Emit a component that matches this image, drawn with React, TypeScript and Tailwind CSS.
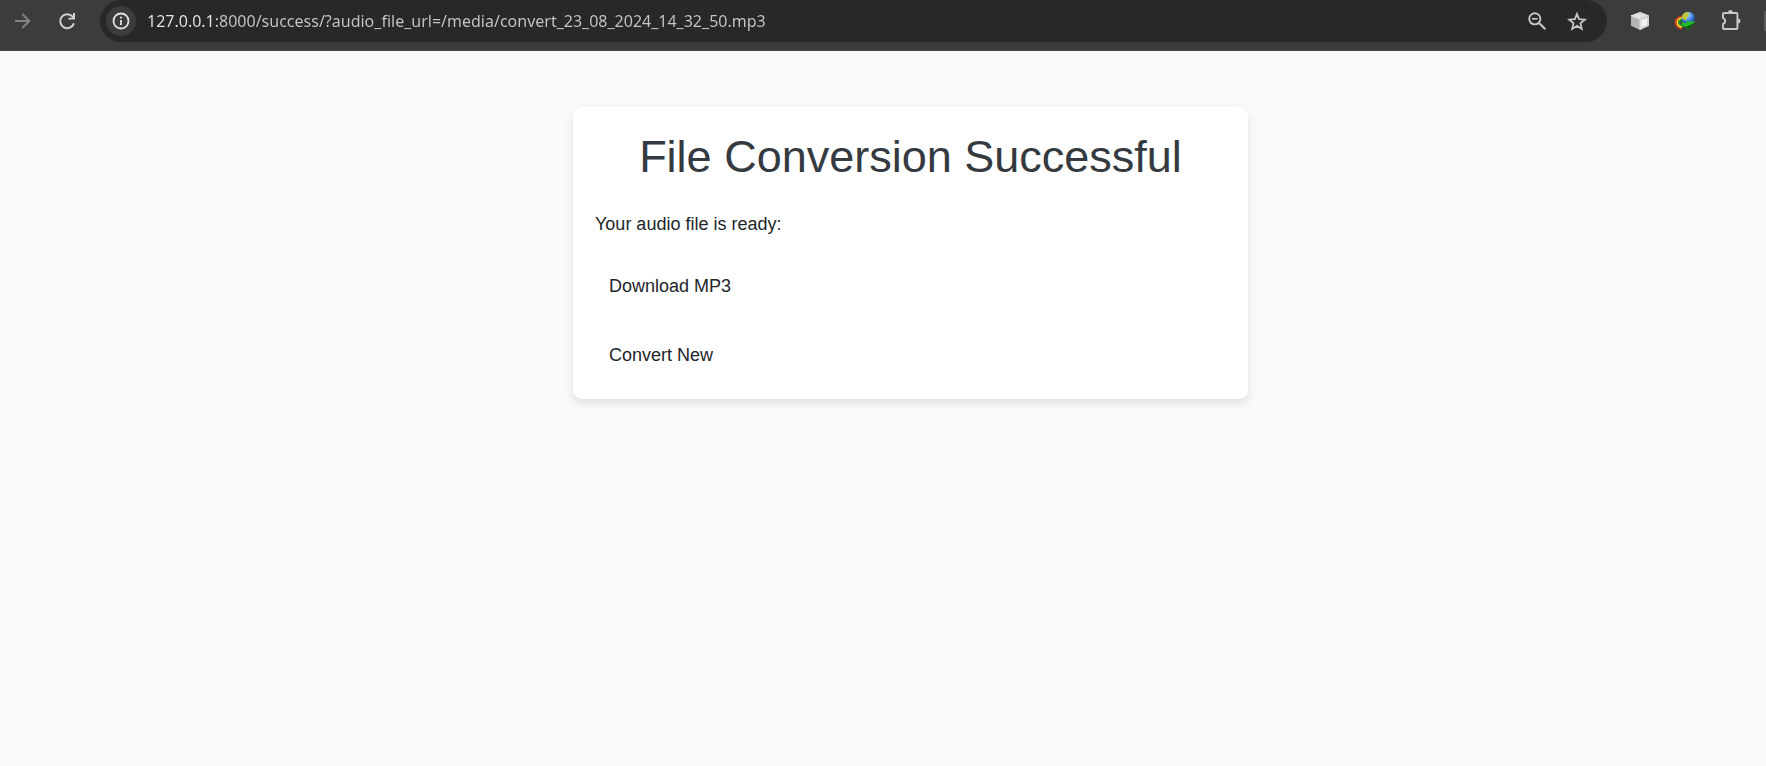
import React from "react";

function ForwardIcon() {
  return (
    <svg width="24" height="24" viewBox="0 0 24 24" fill="none" stroke="#858585" strokeWidth="1.8">
      <path d="M5 12h14M12.3 5l7 7-7 7" />
    </svg>
  );
}

function ReloadIcon() {
  return (
    <svg width="24" height="24" viewBox="0 0 24 24" fill="none">
      <path d="M18.9 14.4A7 7 0 1 1 17.6 7.6L19 9.2" stroke="#d2d2d2" strokeWidth="2" />
      <path d="M20 4v6.6h-6.6V8.8H18V4z" fill="#d2d2d2" />
    </svg>
  );
}

function InfoIcon() {
  return (
    <svg width="18" height="18" viewBox="0 0 18 18" fill="none">
      <circle cx="9" cy="9" r="7.5" stroke="#e3e3e3" strokeWidth="1.8" />
      <path d="M9 8v5" stroke="#e3e3e3" strokeWidth="1.8" />
      <circle cx="9" cy="5.6" r="1.1" fill="#e3e3e3" />
    </svg>
  );
}

function ZoomOutIcon() {
  return (
    <svg width="20" height="20" viewBox="0 0 20 20" fill="none" stroke="#c7c7c7">
      <circle cx="7.8" cy="7.8" r="5.6" strokeWidth="1.9" />
      <path d="M11.8 11.8l6.5 6.5" strokeWidth="2.1" />
      <path d="M5 7.8h5.600" strokeWidth="1.7" />
    </svg>
  );
}

function StarIcon() {
  return (
    <svg width="20" height="20" viewBox="0 0 20 20" fill="none" stroke="#c7c7c7" strokeWidth="1.8">
      <path d="M10 3l2.100 5.200 5.700.45-4.350 3.700 1.350 5.550L10 14.900l-4.800 3 1.350-5.550L2.200 8.650l5.700-.45z" />
    </svg>
  );
}

function CubeIcon() {
  return (
    <svg width="22" height="22" viewBox="0 0 22 22">
      <path d="M11 2l9 3.400v10.400L11 20l-9-4.200V5.400z" fill="#b5b5b5" />
      <path d="M11 2l9 3.400L11 9 2 5.400z" fill="#e0e0e0" />
      <path d="M11 9l9-3.600v10.400L11 20z" fill="#d0d0d0" />
      <path d="M12.500 10.200l5.500-2.100v6.700l-5.500 2.600z" fill="#f2f2f2" />
      <path d="M2 5.400L11 9v11" fill="none" stroke="#ededed" strokeWidth="0.9" />
    </svg>
  );
}

function GlobeArrowIcon() {
  return (
    <svg width="22" height="22" viewBox="0 0 22 22">
      <defs>
        <radialGradient id="globe" cx="0.4" cy="0.25" r="0.8">
          <stop offset="0" stopColor="#b8dcf8" />
          <stop offset="0.5" stopColor="#4a8ce0" />
          <stop offset="1" stopColor="#102c8c" />
        </radialGradient>
      </defs>
      <circle cx="14.3" cy="8.300" r="6.600" fill="url(#globe)" />
      <path d="M8.200 5.600C9.600 2.500 13 1.500 14.500 2.600c1 1.200.2 3-1.200 4.100-1 1.100.2 2.300-1.500 3.200C9.800 10.200 7.500 8.400 8.200 5.600z" fill="#c5c63c" />
      <path d="M7.500 6.400C3 7.200.6 10.800 1.700 14c.9 2.700 3.100 4.300 5.900 4.900" fill="none" stroke="#d94020" strokeWidth="1.700" />
      <path d="M7.800 7.900C4.500 8.600 2.800 11.200 3.500 13.600c.7 2 2.500 3.200 4.600 3.600" fill="none" stroke="#f1d71f" strokeWidth="1.700" />
      <path d="M8.200 9.400C5.900 10.400 5 12 5.500 13.600c.5 1.300 1.700 2 3.200 2.100" fill="none" stroke="#189c35" strokeWidth="1.500" />
      <path d="M8 11c.8 2 2.800 2.600 5 1.700l-1.500-1.500 9.800.4-7.500 9.500-.6-3.300C9.600 18.400 6.800 15.500 8 11z" fill="#25bd26" />
      <path d="M8 15c1.700 1.700 3.900 1.900 6 .9l6.600-3.400-6.800 8.600-.6-3.300c-2.400.3-4.200-.8-5.200-2.800z" fill="#06590f" />
    </svg>
  );
}

function PuzzleIcon() {
  return (
    <svg width="24" height="24" viewBox="0 0 24 24" fill="none">
      <path
        d="M4.900 4h12.600c.6 0 .9.300.9.900v14.200c0 .6-.3.900-.9.900H4.900c-.6 0-.9-.3-.9-.9v-4.300a2.900 2.900 0 0 0 0-5.600V4.900c0-.6.300-.9.900-.9z"
        stroke="#c7c7c7"
        strokeWidth="1.9"
        strokeLinejoin="round"
      />
      <path d="M9 3.600a2.500 2.500 0 0 1 5 0zM18.900 9.500a2.500 2.500 0 0 1 0 5z" fill="#c7c7c7" />
    </svg>
  );
}

function BrowserBar() {
  return (
    <header className="flex h-[51px] items-start border-b border-[#474b4b] bg-[#3c3c3c] pl-[10px]">
      <div className="flex h-[42px] items-center gap-[21px]">
        <button aria-label="Forward"><ForwardIcon /></button>
        <button aria-label="Reload"><ReloadIcon /></button>
      </div>
      <div className="ml-[21px] flex h-[42px] min-w-0 flex-1 items-center rounded-full bg-[#282828] pl-[6px] pr-5">
        <button aria-label="View site information" className="flex size-[30px] shrink-0 items-center justify-center rounded-full bg-[#3c3c3c]">
          <InfoIcon />
        </button>
        <input
          aria-label="Address"
          type="text"
          defaultValue="127.0.0.1:8000/success/?audio_file_url=/media/convert_23_08_2024_14_32_50.mp3"
          className="ml-[11px] h-8 min-w-0 flex-1 bg-[linear-gradient(90deg,#e8e8e8_65px,#c7c7c7_65px)] bg-clip-text font-['Noto_Sans',sans-serif] text-base text-transparent outline-none"
        />
        <div className="flex items-center gap-5">
          <button aria-label="Zoom"><ZoomOutIcon /></button>
          <button aria-label="Bookmark this page"><StarIcon /></button>
        </div>
      </div>
      <div className="ml-[22px] flex h-[42px] items-center gap-[23px]">
        <button aria-label="Cube extension"><CubeIcon /></button>
        <button aria-label="Download manager"><GlobeArrowIcon /></button>
        <button aria-label="Extensions"><PuzzleIcon /></button>
      </div>
      <div className="ml-[21px] mt-[11px] h-5 w-[2px] bg-[#5c5c5c]" />
    </header>
  );
}

export default function App() {
  return (
    <div className="flex min-h-screen flex-col bg-[#f8f9fa] font-['Liberation_Sans',Arial,sans-serif] text-lg leading-[27px] text-[#212529]">
      <BrowserBar />
      <main className="flex-1 pl-[55px] pt-14">
        <section className="mx-auto w-full max-w-[675px] rounded-[9px] bg-white px-[22px] pb-[22px] pt-[23px] shadow-[0_4px_9px_rgba(0,0,0,0.1)]">
          <h1 className="mb-[27px] text-center text-[45px] leading-[54px] text-[#343a40]">File Conversion Successful</h1>
          <p>Your audio file is ready:</p>
          <div className="mt-[27px] flex flex-col items-start gap-[26px]">
            <a href="/media/convert_23_08_2024_14_32_50.mp3" download className="px-[14px] py-2">Download MP3</a>
            <a href="/" className="px-[14px] py-2">Convert New</a>
          </div>
        </section>
      </main>
    </div>
  );
}
